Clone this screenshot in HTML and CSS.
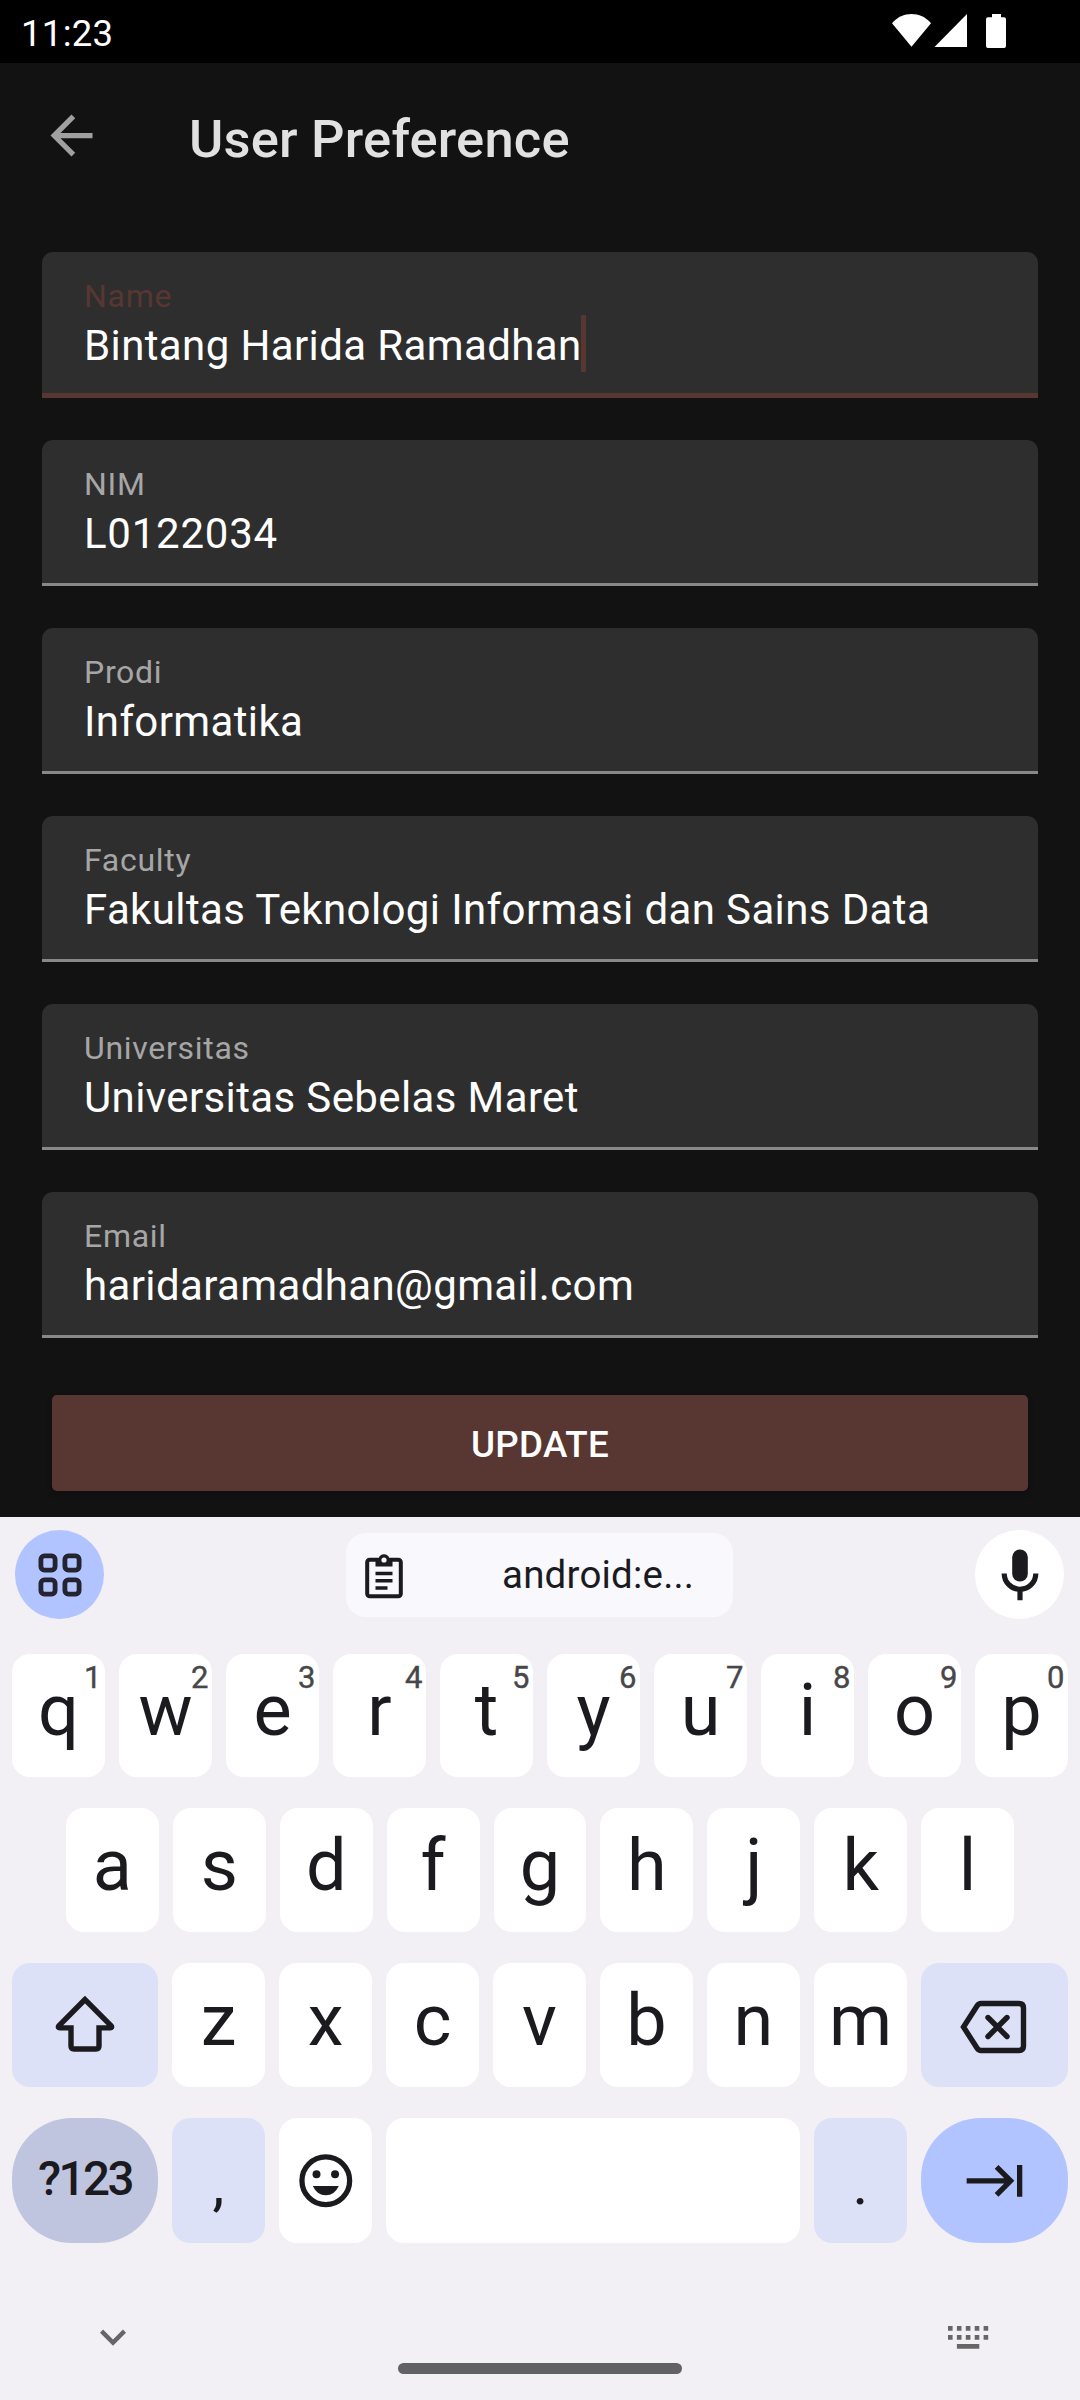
FILE: index.html
```html
<!DOCTYPE html>
<html lang="en">
<head>
<meta charset="utf-8">
<title>User Preference</title>
<link rel="stylesheet" href="styles.css">
</head>
<body>
<div class="screen">
  <div class="status-bar">
    <span class="clock">11:23</span>
    <svg class="status-icons" width="116" height="36" viewBox="891 13 116 36" fill="#fff">
      <path d="M892 23.2C902.500 11 920.500 11 931 23.200L911.500 46.700z"/>
      <path d="M934.500 47L967 14V47z"/>
      <path d="M992 14h9v3.300h3a2 2 0 0 1 2 2V46a2 2 0 0 1-2 2h-16a2 2 0 0 1-2-2V19.300a2 2 0 0 1 2-2h4z"/>
    </svg>
  </div>

  <main class="app">
    <header class="app-bar">
      <svg class="back" width="63" height="63" viewBox="0 0 24 24" fill="#a0a0a0"><path d="M20 11H7.830l5.590-5.590L12 4l-8 8 8 8 1.410-1.410L7.830 13H20v-2z"/></svg>
      <h1 class="title">User Preference</h1>
    </header>

    <form class="form">
      <div class="field focused"><label class="label">Name</label><div class="value">Bintang Harida Ramadhan<span class="caret"></span></div></div>
      <div class="field"><label class="label">NIM</label><div class="value digits">L0122034</div></div>
      <div class="field"><label class="label">Prodi</label><div class="value">Informatika</div></div>
      <div class="field"><label class="label">Faculty</label><div class="value">Fakultas Teknologi Informasi dan Sains Data</div></div>
      <div class="field"><label class="label">Universitas</label><div class="value">Universitas Sebelas Maret</div></div>
      <div class="field"><label class="label">Email</label><div class="value">haridaramadhan@gmail.com</div></div>
      <button class="update" type="button">UPDATE</button>
    </form>
  </main>

  <section class="keyboard">
    <div class="toolbar">
      <div class="round apps">
        <svg width="44" height="44" viewBox="0 0 44 44" fill="none" stroke="#23242f" stroke-width="4.800"><rect x="2.900" y="2.900" width="14.200" height="14.200" rx="3.500"/><rect x="26.900" y="2.900" width="14.200" height="14.200" rx="3.500"/><rect x="2.900" y="26.900" width="14.200" height="14.200" rx="3.500"/><rect x="26.900" y="26.900" width="14.200" height="14.200" rx="3.500"/></svg>
      </div>
      <div class="chip">
        <svg class="clipboard" width="38" height="46" viewBox="0 0 38 46"><rect x="2.200" y="6.700" width="33.600" height="36.600" rx="2.500" fill="none" stroke="#1b1b1f" stroke-width="4"/><path d="M10.500 5h3.300a5.500 5.500 0 0 1 10.400 0h3.300v8.500h-17z" fill="#1b1b1f"/><circle cx="19" cy="7" r="2.600" fill="#f9f8fd"/><path d="M10.500 20.600h17M10.500 27.800h17M10.500 35h12" stroke="#1b1b1f" stroke-width="3.500"/></svg>
        <span class="clip-text">android:e...</span>
      </div>
      <div class="round mic">
        <svg width="38" height="52" viewBox="0 0 38 52"><rect x="11.200" y=".5" width="15.600" height="32" rx="7.800" fill="#1b1b1f"/><path d="M3.200 24.500a15.800 15.800 0 0 0 31.600 0M19 40v11.300" fill="none" stroke="#1b1b1f" stroke-width="5.200"/></svg>
      </div>
    </div>

    <div class="row first">
      <div class="key">q<span class="hint">1</span></div><div class="key">w<span class="hint">2</span></div><div class="key">e<span class="hint">3</span></div><div class="key">r<span class="hint">4</span></div><div class="key">t<span class="hint">5</span></div><div class="key">y<span class="hint">6</span></div><div class="key">u<span class="hint">7</span></div><div class="key">i<span class="hint">8</span></div><div class="key">o<span class="hint">9</span></div><div class="key">p<span class="hint">0</span></div>
    </div>
    <div class="row inset">
      <div class="key">a</div><div class="key">s</div><div class="key">d</div><div class="key">f</div><div class="key">g</div><div class="key">h</div><div class="key">j</div><div class="key">k</div><div class="key">l</div>
    </div>
    <div class="row">
      <div class="key wide tinted shift"><svg width="60" height="58" viewBox="0 0 60 58" fill="none" stroke="#1b1b1f" stroke-width="5.400"><path d="M30 4.500L3.800 30.800Q2.600 32.900 4.800 32.900H16V51q0 3 3 3h22q3 0 3-3V32.900h11.200Q57.400 32.900 56.200 30.800z"/></svg></div>
      <div class="key">z</div><div class="key">x</div><div class="key">c</div><div class="key">v</div><div class="key">b</div><div class="key">n</div><div class="key">m</div>
      <div class="key wide tinted backspace"><svg width="68" height="54" viewBox="0 0 68 54" fill="none" stroke="#1b1b1f" stroke-width="5.400"><path d="M4.500 27L18 6Q19.600 3.500 22 3.500H60Q64.500 3.500 64.500 8V46Q64.500 50.500 60 50.500H22Q19.600 50.500 18 48z"/><path d="M29 17.500l19 19M48 17.500l-19 19" stroke-linecap="round"/></svg></div>
    </div>
    <div class="row last">
      <div class="key wide symbols">?123</div>
      <div class="key tinted punct">,</div>
      <div class="key"><svg class="centered" width="63.600" height="63.600" viewBox="0 0 24 24" fill="#1b1b1f"><circle cx="12" cy="12" r="9" fill="none" stroke="#1b1b1f" stroke-width="2"/><circle cx="8.500" cy="9.500" r="1.500"/><circle cx="15.500" cy="9.500" r="1.500"/><path d="M7.100 14H16.900Q15.300 17.500 12 17.500T7.100 14z"/></svg></div>
      <div class="key space"></div>
      <div class="key tinted punct">.</div>
      <div class="key wide enter"><svg class="centered" width="63.600" height="63.600" viewBox="0 0 24 24" fill="#1b1b1f"><path d="M11.590 7.410L15.170 11H1v2h14.170l-3.590 3.590L13 18l6-6-6-6-1.410 1.410zM20 6v12h2V6h-2z"/></svg></div>
    </div>

    <div class="nav">
      <svg class="hide" width="52" height="52" viewBox="0 0 24 24" fill="#666"><path d="M16.590 8.590L12 13.170 7.410 8.590 6 10l6 6 6-6z"/></svg>
      <div class="pill"></div>
      <svg class="switch" width="41" height="23" viewBox="0 0 41 23" fill="#666"><path d="M0 0h4.600v4.800H0zM8.900 0h4.600v4.800H8.900zM17.800 0h4.600v4.800h-4.600zM26.700 0h4.600v4.800h-4.600zM35.600 0h4.600v4.800h-4.600zM0 9h4.600v4.800H0zM8.900 9h4.600v4.800H8.900zM17.800 9h4.600v4.800h-4.600zM26.700 9h4.600v4.800h-4.600zM35.600 9h4.600v4.800h-4.600zM8.900 18h22.400v4.700H8.900z"/></svg>
    </div>
  </section>
</div>
</body>
</html>
```
FILE: styles.css
```css
* { box-sizing: border-box; }
body { margin: 0; background: #121212; font-family: Roboto, sans-serif; }
svg { display: block; flex: none; }

.screen { width: 1080px; height: 2400px; display: flex; flex-direction: column; overflow: hidden; }

.status-bar { height: 63px; background: #000; color: #fff; display: flex; justify-content: space-between; padding: 0 73px 0 21px; }
.clock { font-size: 36.500px; line-height: 67px; letter-spacing: .3px; }
.status-icons { margin-top: 13px; }

.app { height: 1454px; background: #121212; }
.app-bar { display: flex; align-items: flex-start; height: 189px; padding-left: 39.500px; }
.back { margin-top: 41px; }
.title { margin: 41px 0 0 86.500px; font-size: 52.500px; font-weight: 500; line-height: 70px; letter-spacing: .2px; color: #e1e1e1; }

.form { display: flex; flex-direction: column; gap: 42px; padding: 0 42px; }
.field { height: 146px; padding: 25px 42px 0; background: #2e2e2e; border-bottom: 3px solid #888; border-radius: 11px 11px 0 0; color: #fff; }
.label { display: block; height: 38px; font-size: 32px; line-height: 39px; letter-spacing: .700px; color: #a6a6a6; }
.value { display: flex; height: 57px; font-size: 42px; line-height: 61px; letter-spacing: .380px; white-space: nowrap; }
.value.digits { letter-spacing: .750px; }
.focused { border-bottom: 5px solid #583632; }
.focused .label { color: #583632; }
.caret { width: 5px; height: 57px; margin-left: -.5px; background: #583632; }
.update { height: 96px; margin: 15px 10px 0; padding: 0; border: 0; border-radius: 5px; background: #583632; color: #fff; font: 500 36.750px/99px Roboto, sans-serif; letter-spacing: .300px; box-shadow: 0 3px 6px rgba(0, 0, 0, .2); }

.keyboard { height: 883px; background: #f2f0f5; color: #1b1b1f; }
.toolbar { display: flex; align-items: flex-start; height: 137px; padding: 13px 16px 0 15px; }
.round { width: 89px; height: 89px; border-radius: 50%; display: flex; align-items: center; justify-content: center; }
.apps { background: #b2c4ff; }
.mic { background: #fff; margin-left: auto; }
.chip { display: flex; width: 387px; height: 84px; margin: 3px 0 0 242px; border-radius: 20px; background: #f9f8fd; }
.clipboard { margin: 20px 0 0 18.500px; }
.clip-text { margin-left: 99.500px; font-size: 38.500px; line-height: 84px; letter-spacing: .200px; }

.row { display: flex; gap: 14px; height: 124px; margin: 0 12px 31px; }
.row.first { height: 123px; }
.row.inset { margin-left: 66px; margin-right: 66px; }
.key { position: relative; flex: 1 1 0; height: 100%; border-radius: 18px; background: #fff; text-align: center; font-size: 72px; line-height: 116px; }
.first .key { line-height: 113px; }
.key.wide { flex: 0 0 146px; }
.key.backspace, .key.enter { flex-basis: 147px; }
.hint { position: absolute; top: 6px; right: 3.500px; font: 400 31px/36px Roboto, sans-serif; color: #47474a; -webkit-text-stroke: .4px #47474a; }
.key.tinted { background: #dde1f8; }
.shift svg { margin: 32px auto 0; }
.backspace svg { margin: 37px auto 0 38px; }
.last { height: 125px; margin-bottom: 0; }
.key.symbols { background: #c0c5df; border-radius: 60px; font: 500 47.500px/123px Roboto, sans-serif; letter-spacing: -2.500px; }
.key.punct { font-size: 60px; line-height: 131px; }
.key.space { flex: 0 0 414px; }
.key.enter { background: #b2c4ff; border-radius: 60px; }
.key .centered { margin: 31px auto 0; }
.enter .centered { transform: translateX(1px); }

.nav { display: flex; align-items: flex-start; height: 157px; }
.hide { margin: 68px 0 0 87px; }
.pill { width: 284px; height: 11px; margin: 120px 0 0 259px; border-radius: 5.500px; background: #626264; }
.switch { margin: 83px 0 0 265.700px; }
```
